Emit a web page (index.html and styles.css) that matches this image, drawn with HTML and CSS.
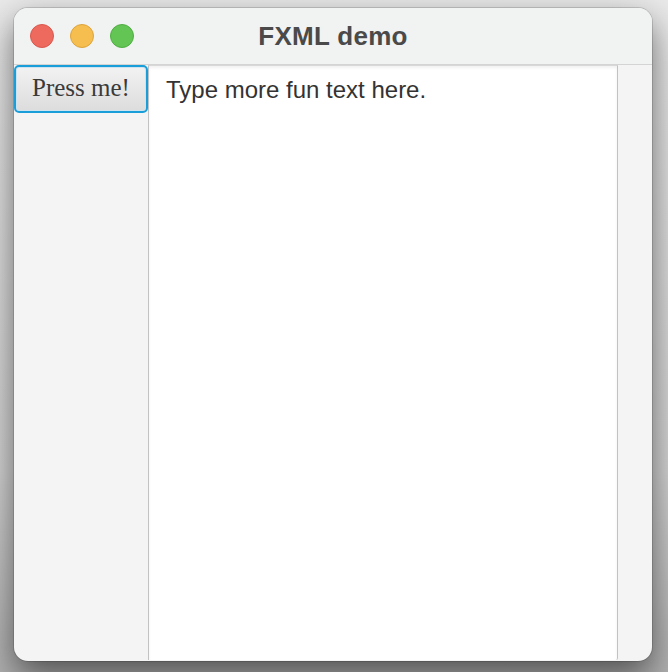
FILE: index.html
```html
<!DOCTYPE html>
<html>
<head>
<meta charset="utf-8">
<link rel="stylesheet" href="styles.css">
</head>
<body>
<div class="window">
  <div class="titlebar">
    <div class="lights">
      <span class="light red"></span>
      <span class="light yellow"></span>
      <span class="light green"></span>
    </div>
    <div class="title">FXML demo</div>
  </div>
  <div class="content">
    <div class="leftcol">
      <button class="btn">Press me!</button>
    </div>
    <div class="textarea">Type more fun text here.</div>
    <div class="rightcol"></div>
  </div>
</div>
</body>
</html>
```
FILE: styles.css
```css
html, body {
  margin: 0;
  padding: 0;
  height: 100%;
}
body {
  background: linear-gradient(#e9e9e9 0%, #d4d4d4 70%, #b0b0b0 100%);
  padding: 8px 16px 0 14px;
  box-sizing: border-box;
  overflow: hidden;
}
.window {
  width: 638px;
  height: 653px;
  background: #f4f4f4;
  border-radius: 14px;
  box-shadow: 0 0 0 1px rgba(0,0,0,0.14), 0 14px 34px rgba(0,0,0,0.55);
  overflow: hidden;
  display: flex;
  flex-direction: column;
}
.titlebar {
  height: 56px;
  flex: none;
  background: #f1f2f2;
  border-bottom: 1px solid #d4d4d4;
  position: relative;
  display: flex;
  align-items: center;
  justify-content: center;
}
.lights {
  position: absolute;
  left: 16px;
  top: 16px;
  display: flex;
  gap: 16px;
}
.light {
  width: 24px;
  height: 24px;
  border-radius: 50%;
  box-sizing: border-box;
}
.red { background: #ee6a5f; border: 1px solid #d9584e; }
.yellow { background: #f5be4f; border: 1px solid #dea43c; }
.green { background: #62c554; border: 1px solid #50ae43; }
.title {
  font-family: "Liberation Sans", Arial, sans-serif;
  font-weight: bold;
  font-size: 26px;
  letter-spacing: 0.3px;
  color: #4a4a4a;
}
.content {
  flex: 1;
  display: flex;
  min-height: 0;
}
.leftcol {
  width: 134px;
  flex: none;
}
.btn {
  display: block;
  width: 134px;
  height: 48px;
  margin: 0;
  padding: 0 0 2px 0;
  box-sizing: border-box;
  border: 2px solid #1a9ed9;
  border-radius: 5px;
  background: linear-gradient(#f2f2f2, #dcdcdc);
  box-shadow: inset 0 0 0 1px #cfe3ee;
  font-family: "Liberation Serif", "Times New Roman", serif;
  font-size: 25px;
  color: #3a3a3a;
}
.textarea {
  width: 470px;
  flex: none;
  box-sizing: border-box;
  background: #fff;
  border: 1px solid #c2c2c2;
  border-top: 1px solid #d8d8d8;
  border-bottom: none;
  border-bottom-right-radius: 2px;
  margin-bottom: 1px;
  box-shadow: inset 0 2px 3px rgba(0,0,0,0.06);
  padding: 10px 17px;
  font-family: "Liberation Sans", Arial, sans-serif;
  font-size: 24px;
  color: #333;
}
.rightcol {
  flex: 1;
}
```
